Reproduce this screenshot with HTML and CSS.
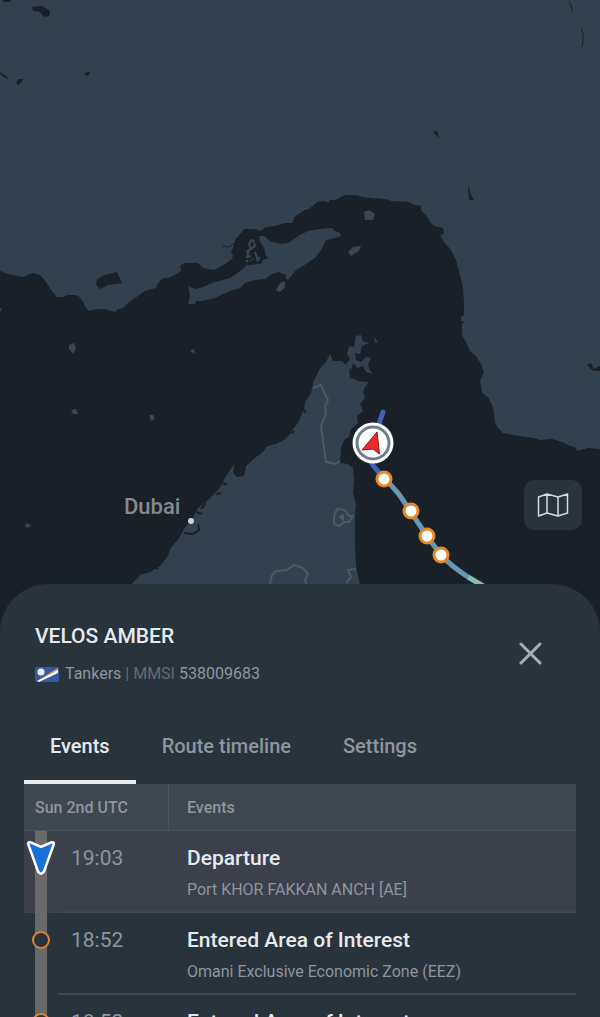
FILE: index.html
```html
<!DOCTYPE html>
<html lang="en">
<head>
    <meta charset="UTF-8">
    <meta name="viewport" content="width=device-width, initial-scale=1.0">
    <title>VELOS AMBER</title>
    <link rel="stylesheet" href="styles.css">
</head>
<body>
    <div class="app">
        <!-- map -->
        <div class="map">
            <svg class="map-canvas" viewBox="0 0 600 640" aria-label="Map of the Strait of Hormuz">
                <rect class="land" width="600" height="640"/>
                <!-- sea -->
                <path class="sea" d="M0 271L8 274 23 277 33 273 40 275 46 282 51 290 57 297 63 297 68 295 75 295 80 297 84 304 88 311 98 309 105 309 115 312 118 309 123 308 129 302 135 298 145 291 156 288 158 283 163 278 168 278 175 275 181 271 180 266 184 263 198 263 203 268 214 270 225 264 232 259 233 255 231 252 234 245 235 240 240 234 245 229 250 229 256 229 260 231 266 227 275 226 285 223 292 223 295 216 305 210 309 209 317 202 325 201 328 203 330 200 335 200 345 195 356 195 363 197 372 198 385 199 392 201 408 202 415 205 421 206 421 210 427 216 430 222 434 226 439 227 443 228 444 234 440 235 444 242 451 250 456 260 460 275 463 288 464 302 464 315 461 317 461 321 465 321 462 324 462 335 467 344 470 351 476 356 481 364 484 372 480 381 482 393 488 397 493 407 495 422 498 428 503 433 520 436 534 438 540 440 552 439 562 442 570 446 575 447 577 451 588 448 600 449V640H0Z"/>
                <path class="sea" d="M96 285L97 279 105 275 117 272 122 283 108 285 100 289ZM32 7L42 6 50 11 49 16 44 17 40 12 33 11ZM2 0H11L10 2H5ZM0 72L6 76 9 80 1 75ZM16 82L19 79 23 79 22 82 18 85ZM84 73L89 72 90 74 87 76ZM433 132L437 131 439 138ZM468 185L470 191 472 197 474 200 469 200ZM587 365L591 363 594 369 600 366V371L593 371Z"/>
                <path class="creek" d="M569 1L571 5 572 12M581 28Q585 36 582 47M222 246L229 247 236 242"/>
                <!-- islands -->
                <path class="land" d="M188 286L195 289 203 287 215 282 230 278 240 271 247 265 260 264 266 257 264 248 260 242 259 236 264 236 270 241 280 244 288 243 298 236 308 231 320 229 332 228 335 231 340 233 341 236 335 238 326 240 321 250 315 258 303 266 296 270 288 280 285 278 286 275 279 272 272 274 265 279 255 280 245 283 240 288 230 291 215 298 202 301 196 301 195 304 188 304 190 296Z"/>
                <path class="reef" d="M252 239L249 244 251 249 255 246 253 240M246 252L249 250 247 257 251 256M255 252L257 258 252 260 250 263M246 262L248 260M257 261L260 257"/>
                <path class="sea-line" d="M249 264L256 258M260 264L262 257 268 258"/>
                <path class="islet" d="M364 212L369 210 375 214 373 220 365 220ZM348 252L353 247 361 246 359 251 351 256ZM276 290L280 283 285 281 285 287 280 292ZM69 345L74 343 76 349 73 354 69 349ZM190 351L194 349 195 354ZM71 410L76 409 78 414 73 414ZM149 415L153 415 155 419 151 421ZM25 525L28 523 31 526 27 528ZM0 308L2 309 0 312Z"/>
                <!-- peninsula -->
                <path class="land" d="M90 640L132 584 140 575 150 572 160 566 168 556 170 549 179 538 184 529 192 519 198 508 208 500 219 489 226 476 234 464 233 473 237 477 244 476 246 466 256 457 262 453 267 446 276 444 284 440 291 433 292 430 298 423 304 409 305 402 311 393 313 383 319 370 326 362 330 354 333 361 341 361 349 366 350 378 355 379 358 381 369 382 365 387 363 392 365 398 360 404 363 411 357 416 358 423 351 429 349 437 344 440 341 448 340 463 348 464 353 468 354 480 353 493 356 504 355 515 355 545 356 566 360 584 363 640Z"/>
                <path class="land" d="M349 346L354 347 356 336 361 335 363 341 369 343 362 346 360 354 355 353 356 360 361 362 366 357 371 358 368 364 369 369 373 374 366 372 363 366 358 368 353 363 351 370 346 364 350 359 347 354ZM374 337L378 342 375 343Z"/>
                <path class="sea-line" d="M306 413L303 409M292 433L294 431M216 494L221 493M223 483L227 485M201 509L206 503M196 512L202 514M198 524L199 530 193 534 184 533M154 565L158 569"/>
                <!-- borders -->
                <path class="border" d="M313 388L321 385 324 392 328 400 325 406 326 414 321 426 323 441 326 462 336 464 340 461M334 516L337 509 345 510 349 516 353 516 349 522 344 522 339 526 334 524ZM340 517L343 515 343 520ZM270 584L272 575 276 571 287 570 294 565 303 568 308 574 305 580 307 586M356 569L348 570 351 577 346 583"/>
                <!-- Dubai -->
                <text class="city" x="124" y="514">Dubai</text>
                <circle class="city-dot" cx="191" cy="521" r="3"/>
                <!-- track -->
                <path class="track track-fast" d="M383 412L379 424M372 464L384 479"/>
                <path class="track track-mid" d="M384 479C396 488 403 500 410 511L427 536 440 554Q451 566 468 577"/>
                <path class="track track-slow" d="M468 577L490 590"/>
                <g class="stop">
                    <circle cx="384" cy="479" r="7"/>
                    <circle cx="411" cy="511" r="7"/>
                    <circle cx="427" cy="536" r="7"/>
                    <circle cx="441" cy="555" r="7"/>
                </g>
                <!-- vessel -->
                <circle cx="373" cy="443" r="20.5" fill="#fff"/>
                <circle cx="373" cy="443" r="16" fill="#fff" stroke="#6f7d8e" stroke-width="3"/>
                <path d="M377 432L379.500 454 373 449 362 450Z" fill="#f02a2a" stroke="#8c1414" stroke-linejoin="round"/>
            </svg>
            <button class="layers-btn" aria-label="Map layers">
                <svg viewBox="0 0 32 26" width="32" height="26">
                    <path d="M1.500 5L10 2 21 5 30.500 2V21L21 24 10 21 1.500 24ZM10 2V21M21 5V24"/>
                </svg>
            </button>
        </div>

        <!-- bottom sheet -->
        <div class="sheet">
            <div class="vessel">
                <div class="vessel-info">
                    <h1>VELOS AMBER</h1>
                    <p class="vessel-meta">
                        <svg class="flag" viewBox="0 0 24 15" width="24" height="15" role="img" aria-label="Marshall Islands">
                            <rect width="24" height="15" rx="2" fill="#3558a0"/>
                            <path d="M2 14L23 1V3Z" fill="#e8a860"/>
                            <path d="M2 14L23 3V6L4 15Z" fill="#fff"/>
                            <circle cx="6" cy="5" r="3.500" fill="#e8eef4"/>
                        </svg>
                        <span>Tankers <span class="dim">| MMSI</span> 538009683</span>
                    </p>
                </div>
                <button class="close-btn" aria-label="Close">
                    <svg viewBox="0 0 24 24" width="24" height="24"><path d="M3 2L22 21M22 2L3 21"/></svg>
                </button>
            </div>

            <div class="tabs" role="tablist">
                <button class="tab active" role="tab" aria-selected="true">Events</button>
                <button class="tab" role="tab" aria-selected="false">Route timeline</button>
                <button class="tab" role="tab" aria-selected="false">Settings</button>
            </div>

            <div class="events">
                <table>
                    <colgroup>
                        <col class="col-rail">
                        <col class="col-time">
                        <col>
                    </colgroup>
                    <thead>
                        <tr>
                            <th class="date" colspan="2" scope="col">Sun 2nd UTC</th>
                            <th scope="col">Events</th>
                        </tr>
                    </thead>
                    <tbody>
                        <tr class="current">
                            <td class="rail">
                                <svg viewBox="0 0 34 36" width="34" height="36">
                                    <path d="M4.500 5Q3 1.500 7 2.500L17 7 27 2.500Q31 1.500 29.500 5L20 31.500Q17 36 14 31.500Z" fill="#1a6fd8" stroke="#fff" stroke-width="2.500"/>
                                </svg>
                            </td>
                            <td class="time">19:03</td>
                            <td class="event">
                                <h2>Departure</h2>
                                <p>Port KHOR FAKKAN ANCH [AE]</p>
                            </td>
                        </tr>
                        <tr>
                            <td class="rail">
                                <svg viewBox="0 0 34 36" width="34" height="36"><circle cx="17" cy="18" r="8"/></svg>
                            </td>
                            <td class="time">18:52</td>
                            <td class="event">
                                <h2>Entered Area of Interest</h2>
                                <p>Omani Exclusive Economic Zone (EEZ)</p>
                            </td>
                        </tr>
                        <tr>
                            <td class="rail">
                                <svg viewBox="0 0 34 36" width="34" height="36"><circle cx="17" cy="18" r="8"/></svg>
                            </td>
                            <td class="time">18:52</td>
                            <td class="event">
                                <h2>Entered Area of Interest</h2>
                            </td>
                        </tr>
                    </tbody>
                </table>
            </div>
        </div>
    </div>
</body>
</html>
```
FILE: styles.css
```css
* {
    box-sizing: border-box;
}

body {
    margin: 0;
    background: #29333b;
    color: #8e959e;
    font-family: Roboto, "Liberation Sans", sans-serif;
}

h1,
h2,
p {
    margin: 0;
}

button {
    padding: 0;
    border: none;
    background: transparent;
    font-family: inherit;
    cursor: pointer;
}

.app {
    display: flex;
    flex-direction: column;
    height: 100vh;
    overflow: hidden;
}

/* map */
.map {
    position: relative;
    flex: none;
}

.map-canvas {
    display: block;
    width: 100%;
}

.land {
    fill: #32414d;
}

.sea {
    fill: #192027;
}

.islet {
    fill: #3c464f;
}

.creek,
.sea-line {
    fill: none;
    stroke: #192027;
    stroke-width: 2;
}

.creek {
    stroke-width: 1;
}

.reef {
    fill: none;
    stroke: #3b4850;
    stroke-width: 2;
}

.border {
    fill: none;
    stroke: #4b5963;
    stroke-width: 2;
    stroke-linejoin: round;
}

.city {
    fill: #868990;
    font-size: 22px;
    font-weight: 500;
}

.city-dot {
    fill: #cdd1d4;
}

.track {
    fill: none;
    stroke-width: 5;
}

.track-fast {
    stroke: #4263b5;
    stroke-linecap: round;
}

.track-mid {
    stroke: #6996b2;
}

.track-slow {
    stroke: #83bfaa;
}

.stop {
    fill: #fff;
    stroke: #e5872b;
    stroke-width: 3;
}

.layers-btn {
    position: absolute;
    right: 18px;
    bottom: 110px;
    display: flex;
    align-items: center;
    justify-content: center;
    width: 58px;
    height: 50px;
    border-radius: 10px;
    background: #29333b;
}

.layers-btn path {
    fill: none;
    stroke: #d5dbe2;
    stroke-width: 1.5;
    stroke-linejoin: round;
}

/* bottom sheet */
.sheet {
    position: relative;
    display: flex;
    flex: 1;
    flex-direction: column;
    min-height: 0;
    margin-top: -56px;
    padding: 40px 24px 0;
    border-radius: 48px 48px 0 0;
    background: #29333b;
}

.vessel {
    display: flex;
    justify-content: space-between;
    padding: 0 34px 0 11px;
}

.vessel h1 {
    color: #e6eaee;
    font-size: 21px;
    font-weight: 500;
    line-height: 24px;
}

.vessel-meta {
    display: flex;
    align-items: center;
    gap: 6px;
    margin-top: 16px;
    font-size: 16px;
    line-height: 20px;
}

.dim {
    color: #626b74;
}

.close-btn {
    align-self: center;
    height: 24px;
}

.close-btn path {
    fill: none;
    stroke: #a8aeb6;
    stroke-width: 3;
    stroke-linecap: round;
}

.tabs {
    display: flex;
    flex: none;
    margin-top: 28px;
}

.tab {
    height: 72px;
    padding: 0 26px;
    border-bottom: 4px solid transparent;
    color: #8e959e;
    font-size: 20px;
    font-weight: 500;
}

.tab.active {
    border-bottom-color: #e9e9eb;
    color: #e6eaee;
}

/* events table */
.events {
    min-height: 0;
    overflow: hidden;
}

table {
    width: 100%;
    table-layout: fixed;
    border-collapse: separate;
    border-spacing: 0;
}

.col-rail {
    width: 34px;
}

.col-time {
    width: 111px;
}

th {
    height: 47px;
    padding: 0 18px;
    border-bottom: 1px solid #4a545e;
    background: #3f4750;
    font-size: 16px;
    font-weight: 500;
    text-align: left;
}

.date {
    padding: 0 0 0 11px;
    border-right: 1px solid #4a545e;
}

td {
    height: 82px;
    padding: 0;
    border-bottom: 2px solid #3d4750;
    vertical-align: top;
}

.current td {
    background-color: #3b404b;
}

.rail {
    padding-top: 9px;
    border-bottom: none;
    background-image: linear-gradient(#6a6a6b, #6a6a6b);
    background-position: 11px 0;
    background-repeat: no-repeat;
    background-size: 12px 100%;
}

.rail svg {
    display: block;
}

.rail circle {
    fill: #29333b;
    stroke: #df822e;
    stroke-width: 2;
}

.time {
    padding: 15px 0 0 13px;
    font-size: 21px;
    line-height: 24px;
}

.event {
    padding: 15px 18px 0;
}

.event h2 {
    color: #e6eaee;
    font-size: 21px;
    font-weight: 500;
    line-height: 24px;
}

.event p {
    margin-top: 10px;
    font-size: 16px;
    line-height: 20px;
}
```
